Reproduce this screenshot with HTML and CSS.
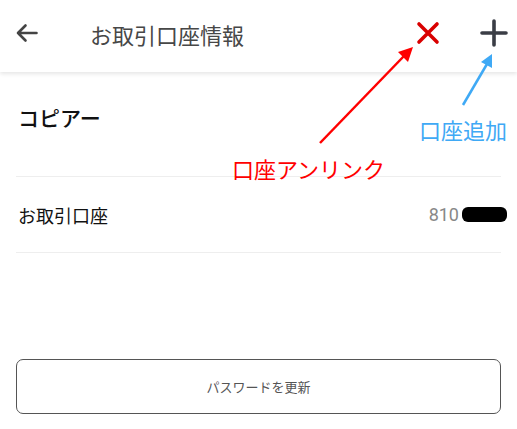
FILE: index.html
```html
<!DOCTYPE html>
<html lang="ja">
<head>
    <meta charset="UTF-8">
    <meta name="viewport" content="width=device-width, initial-scale=1.0">
    <title>お取引口座情報</title>
    <link rel="stylesheet" href="styles.css">
</head>
<body>
    <div class="page">
        <header class="topbar">
            <button class="icon-btn back">
                <svg width="24" height="24" viewBox="0 0 24 24">
                    <path d="M21.5 12H3M10.5 4.5L3 12l7.5 7.5" fill="none" stroke="#444" stroke-width="2.6" stroke-linecap="round" stroke-linejoin="round"/>
                </svg>
            </button>
            <h1 class="title">お取引口座情報</h1>
            <button class="icon-btn unlink">
                <svg width="24" height="24" viewBox="0 0 24 24">
                    <path d="M3 3l18 18M21 3L3 21" fill="none" stroke="#d90000" stroke-width="3.6" stroke-linecap="round"/>
                </svg>
            </button>
            <button class="icon-btn add">
                <svg width="28" height="28" viewBox="0 0 28 28">
                    <path d="M14 2v24M2 14h24" fill="none" stroke="#3a3d45" stroke-width="3.6" stroke-linecap="round"/>
                </svg>
            </button>
        </header>

        <main class="content">
            <div class="section-head">コピアー</div>
            <div class="row">
                <span class="label">お取引口座</span>
                <span class="value">810<span class="mask"></span></span>
            </div>
            <button class="outline-btn">パスワードを更新</button>
        </main>

        <!-- annotations -->
        <svg class="notes" width="517" height="429" viewBox="0 0 517 429">
            <line x1="320" y1="143" x2="404" y2="56" stroke="#ff0000" stroke-width="2.5"/>
            <polygon points="413,47 398,52 408,62" fill="#ff0000"/>
            <line x1="463" y1="105" x2="487" y2="64" stroke="#3fa9f5" stroke-width="2.5"/>
            <polygon points="492,54 481,62 492,68" fill="#3fa9f5"/>
        </svg>
        <span class="note note-red">口座アンリンク</span>
        <span class="note note-blue">口座追加</span>
    </div>
</body>
</html>
```

FILE: styles.css
```css
body {
    margin: 0;
    font-family: "Noto Sans CJK JP", "Noto Sans", sans-serif;
    background: #fff;
    color: #111;
}
.page {
    position: relative;
    width: 517px;
    height: 429px;
    overflow: hidden;
}
.topbar {
    height: 66px;
    display: flex;
    align-items: center;
    padding: 0 8px 6px 14px;
    box-shadow: 0 2px 4px rgba(0, 0, 0, 0.1);
}
.icon-btn {
    background: none;
    border: none;
    padding: 0;
    display: flex;
    align-items: center;
    justify-content: center;
}
.back {
    width: 26px;
    height: 26px;
}
.title {
    flex: 1;
    margin: 2px 0 0 50px;
    font-size: 22px;
    font-weight: normal;
    color: #474747;
}
.unlink {
    width: 26px;
    height: 26px;
    margin-right: 38px;
}
.add {
    width: 30px;
    height: 30px;
}
.content {
    padding: 0 16px;
}
.section-head {
    height: 74px;
    padding: 30px 0 0 2px;
    line-height: 30px;
    font-size: 21px;
    font-weight: 500;
    border-bottom: 1px solid #eee;
}
.row {
    height: 75px;
    display: flex;
    align-items: center;
    justify-content: space-between;
    padding-left: 2px;
    border-bottom: 1px solid #eee;
}
.label {
    font-size: 18px;
}
.value {
    display: flex;
    align-items: center;
    margin-right: -6px;
    font-family: Roboto, sans-serif;
    font-size: 18px;
    color: #888;
}
.mask {
    width: 45px;
    height: 15px;
    margin-left: 3px;
    background: #000;
    border-radius: 6px;
}
.outline-btn {
    display: block;
    width: 100%;
    height: 55px;
    margin-top: 106px;
    border: 1px solid #555;
    border-radius: 7px;
    background: #fff;
    font-family: "Noto Sans CJK JP", sans-serif;
    font-size: 13px;
    color: #555;
}
.notes {
    position: absolute;
    top: 0;
    left: 0;
}
.note {
    position: absolute;
    font-size: 22px;
    line-height: 1;
}
.note-red {
    left: 232px;
    top: 157px;
    color: #ff0000;
}
.note-blue {
    left: 419px;
    top: 118px;
    color: #3fa9f5;
}
```
